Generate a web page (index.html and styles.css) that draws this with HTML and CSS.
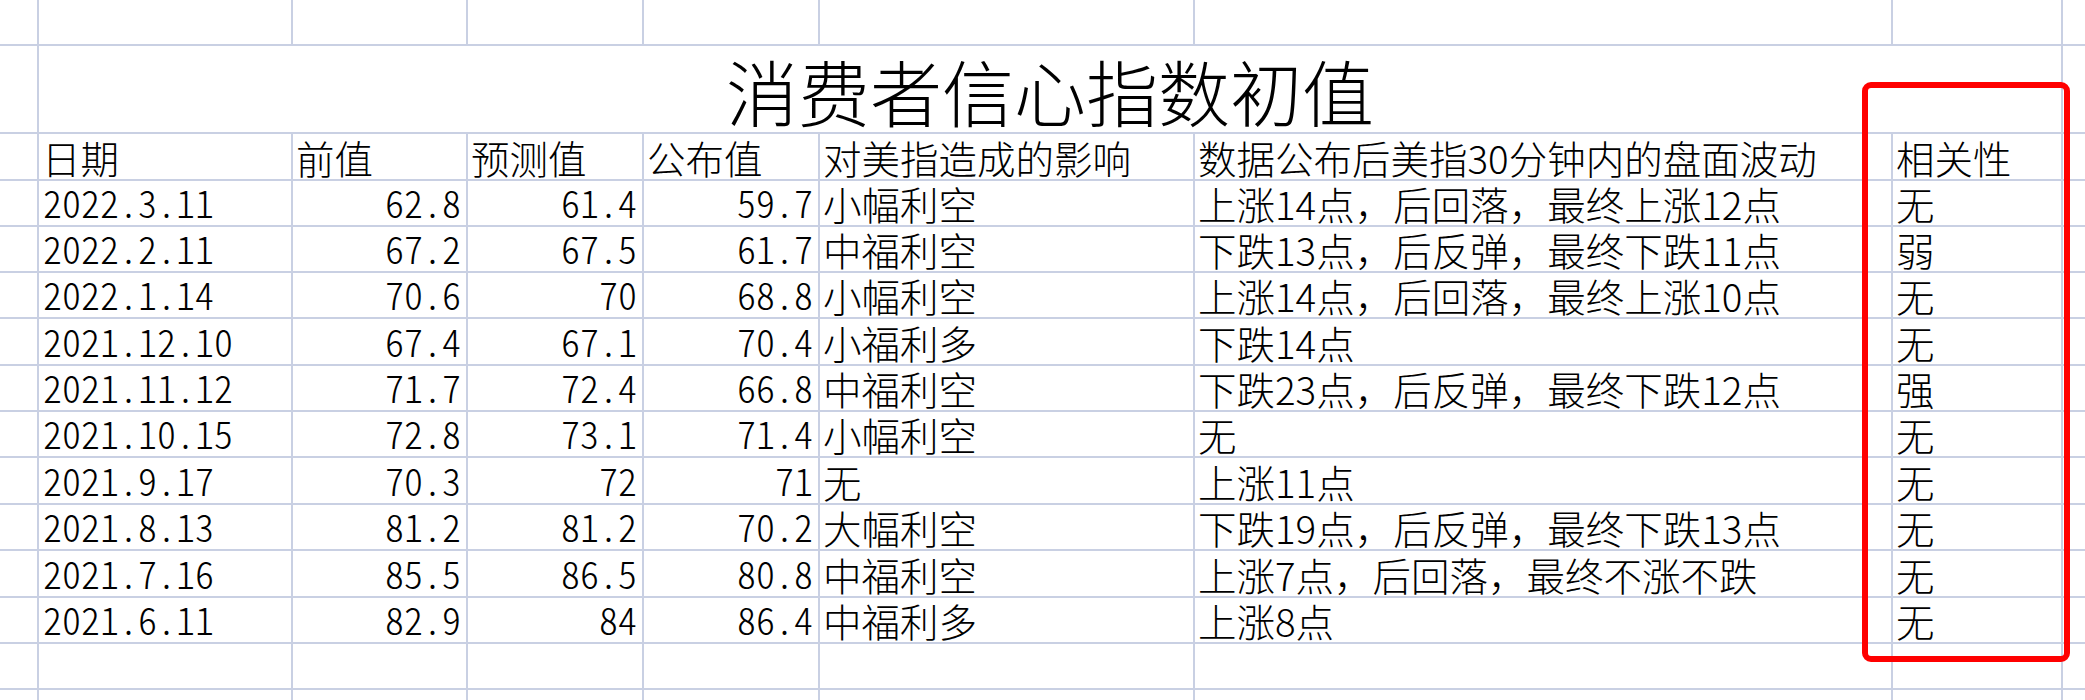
FILE: index.html
```html
<!DOCTYPE html>
<html lang="zh-CN">
<head>
<meta charset="utf-8">
<title>消费者信心指数初值</title>
<link rel="stylesheet" href="styles.css">
</head>
<body>
<div class="sheet">
  <div class="c"></div><div class="c"></div><div class="c"></div><div class="c"></div><div class="c"></div><div class="c"></div><div class="c"></div><div class="c"></div><div class="c e"></div>

  <div class="c"></div><div class="c title">消费者信心指数初值</div><div class="c e"></div>

  <div class="c"></div><div class="c t">日期</div><div class="c t">前值</div><div class="c t">预测值</div><div class="c t">公布值</div><div class="c t">对美指造成的影响</div><div class="c t">数据公布后美指30分钟内的盘面波动</div><div class="c t">相关性</div><div class="c e"></div>

  <div class="c"></div><div class="c d">2022.3.11</div><div class="c n">62.8</div><div class="c n">61.4</div><div class="c n">59.7</div><div class="c t">小幅利空</div><div class="c t">上涨14点，后回落，最终上涨12点</div><div class="c t">无</div><div class="c e"></div>
  <div class="c"></div><div class="c d">2022.2.11</div><div class="c n">67.2</div><div class="c n">67.5</div><div class="c n">61.7</div><div class="c t">中福利空</div><div class="c t">下跌13点，后反弹，最终下跌11点</div><div class="c t">弱</div><div class="c e"></div>
  <div class="c"></div><div class="c d">2022.1.14</div><div class="c n">70.6</div><div class="c n">70</div><div class="c n">68.8</div><div class="c t">小幅利空</div><div class="c t">上涨14点，后回落，最终上涨10点</div><div class="c t">无</div><div class="c e"></div>
  <div class="c"></div><div class="c d">2021.12.10</div><div class="c n">67.4</div><div class="c n">67.1</div><div class="c n">70.4</div><div class="c t">小福利多</div><div class="c t">下跌14点</div><div class="c t">无</div><div class="c e"></div>
  <div class="c"></div><div class="c d">2021.11.12</div><div class="c n">71.7</div><div class="c n">72.4</div><div class="c n">66.8</div><div class="c t">中福利空</div><div class="c t">下跌23点，后反弹，最终下跌12点</div><div class="c t">强</div><div class="c e"></div>
  <div class="c"></div><div class="c d">2021.10.15</div><div class="c n">72.8</div><div class="c n">73.1</div><div class="c n">71.4</div><div class="c t">小幅利空</div><div class="c t">无</div><div class="c t">无</div><div class="c e"></div>
  <div class="c"></div><div class="c d">2021.9.17</div><div class="c n">70.3</div><div class="c n">72</div><div class="c n">71</div><div class="c t">无</div><div class="c t">上涨11点</div><div class="c t">无</div><div class="c e"></div>
  <div class="c"></div><div class="c d">2021.8.13</div><div class="c n">81.2</div><div class="c n">81.2</div><div class="c n">70.2</div><div class="c t">大幅利空</div><div class="c t">下跌19点，后反弹，最终下跌13点</div><div class="c t">无</div><div class="c e"></div>
  <div class="c"></div><div class="c d">2021.7.16</div><div class="c n">85.5</div><div class="c n">86.5</div><div class="c n">80.8</div><div class="c t">中福利空</div><div class="c t">上涨7点，后回落，最终不涨不跌</div><div class="c t">无</div><div class="c e"></div>
  <div class="c"></div><div class="c d">2021.6.11</div><div class="c n">82.9</div><div class="c n">84</div><div class="c n">86.4</div><div class="c t">中福利多</div><div class="c t">上涨8点</div><div class="c t">无</div><div class="c e"></div>

  <div class="c"></div><div class="c"></div><div class="c"></div><div class="c"></div><div class="c"></div><div class="c"></div><div class="c"></div><div class="c"></div><div class="c e"></div>

  <div class="c last"></div><div class="c last"></div><div class="c last"></div><div class="c last"></div><div class="c last"></div><div class="c last"></div><div class="c last"></div><div class="c last"></div><div class="c last e"></div>

  <div class="highlight"></div>
</div>
</body>
</html>
```

FILE: styles.css
```css
html, body {
  margin: 0;
  padding: 0;
  background: #ffffff;
}

body {
  width: 2085px;
  height: 700px;
  overflow: hidden;
  font-family: "Noto Sans CJK SC", "Noto Sans", sans-serif;
  color: #000000;
}

.sheet {
  position: relative;
  display: grid;
  grid-template-columns: 39px 254px 175px 176px 176px 375px 698px 170px 22px;
  grid-template-rows: 46px 88px 47px 46px 46px 46px 47px 46px 46px 47px 46px 47px 46px 46px 10px;
  width: 2085px;
  height: 700px;
}

.c {
  box-sizing: border-box;
  border-right: 2px solid #c9d0e3;
  border-bottom: 2px solid #c9d0e3;
  display: flex;
  align-items: flex-end;
  line-height: 1;
  white-space: nowrap;
}

.c.e {
  border-right: none;
}

.c.last {
  border-bottom: none;
}

.t {
  font-size: 38.5px;
  font-weight: 300;
  padding: 0 0 3px 3px;
  justify-content: flex-start;
}

.d,
.n {
  font-family: "Noto Sans CJK SC", "Noto Sans", sans-serif;
  font-size: 38px;
  font-weight: 300;
  font-feature-settings: "hwid" 1;
  font-variant-east-asian: proportional-width;
}

.d {
  font-variant-east-asian: normal;
  padding: 0 0 4px 4px;
  justify-content: flex-start;
}

.n {
  font-variant-east-asian: normal;
  padding: 0 5px 4px 0;
  justify-content: flex-end;
}

.title {
  grid-column: 2 / 9;
  justify-content: center;
  font-size: 72px;
  font-weight: 300;
  padding-bottom: 6px;
}

.highlight {
  position: absolute;
  left: 1862px;
  top: 82px;
  width: 208px;
  height: 580px;
  box-sizing: border-box;
  border: 6px solid #ff0000;
  border-radius: 9px;
}
```
